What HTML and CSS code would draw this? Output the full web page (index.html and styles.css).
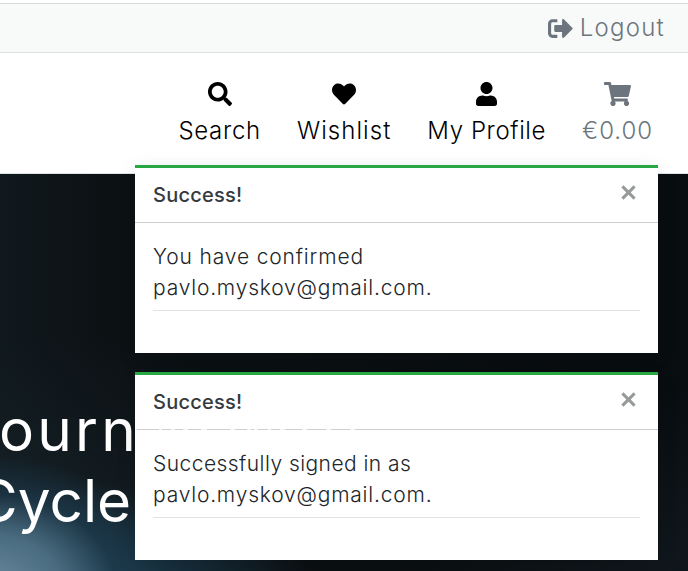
FILE: index.html
```html
<!DOCTYPE html>
<html lang="en">
<head>
<meta charset="utf-8">
<title>Shop</title>
<link rel="stylesheet" href="styles.css">
</head>
<body>
<div class="topbar">
  <a class="logout"><svg class="icon-logout" viewBox="0 0 512 512"><path d="M497 273L329 441c-15 15-41 4.500-41-17v-96H152c-13.300 0-24-10.700-24-24v-96c0-13.300 10.700-24 24-24h136V88c0-21.400 25.900-32 41-17l168 168c9.300 9.400 9.300 24.600 0 34zM192 436v-40c0-6.600-5.400-12-12-12H96c-17.700 0-32-14.300-32-32V160c0-17.700 14.300-32 32-32h84c6.600 0 12-5.400 12-12V76c0-6.600-5.400-12-12-12H96c-53 0-96 43-96 96v192c0 53 43 96 96 96h84c6.600 0 12-5.400 12-12z"/></svg><span>Logout</span></a>
</div>
<header class="nav">
  <a class="item search"><svg class="icon" viewBox="0 0 512 512"><path d="M505 442.700L405.300 343c-4.500-4.500-10.600-7-17-7H372c27.600-35.300 44-79.700 44-128C416 93.100 322.900 0 208 0S0 93.100 0 208s93.100 208 208 208c48.300 0 92.700-16.400 128-44v16.300c0 6.400 2.500 12.500 7 17l99.700 99.700c9.400 9.400 24.600 9.400 33.900 0l28.300-28.300c9.400-9.400 9.400-24.600.1-34zM208 336c-70.700 0-128-57.200-128-128 0-70.700 57.200-128 128-128 70.700 0 128 57.200 128 128 0 70.700-57.200 128-128 128z"/></svg><span>Search</span></a>
  <a class="item wish"><svg class="icon" viewBox="0 0 512 512"><path d="M462.300 62.600C407.500 15.900 326 24.300 275.700 76.200L256 96.500l-19.700-20.300C186.100 24.300 104.500 15.900 49.700 62.600c-62.800 53.600-66.100 149.800-9.900 207.900l193.500 199.800c12.500 12.900 32.800 12.900 45.300 0l193.500-199.800c56.300-58.100 53-154.300-9.800-207.900z"/></svg><span>Wishlist</span></a>
  <a class="item profile"><svg class="icon" viewBox="0 0 448 512"><path d="M224 256c70.700 0 128-57.300 128-128S294.700 0 224 0 96 57.300 96 128s57.300 128 128 128zm89.600 32h-16.700c-22.200 10.200-46.900 16-72.900 16s-50.600-5.800-72.900-16h-16.700C60.200 288 0 348.200 0 422.400V464c0 26.500 21.500 48 48 48h352c26.500 0 48-21.500 48-48v-41.600c0-74.200-60.200-134.400-134.400-134.400z"/></svg><span>My Profile</span></a>
  <a class="item cart"><svg class="icon" viewBox="0 0 576 512"><path d="M528.100 301.300l47.300-208C578.800 78.300 567.400 64 552 64H159.200l-9.200-44.800C147.800 8 137.900 0 126.500 0H24C10.700 0 0 10.700 0 24v16c0 13.300 10.700 24 24 24h69.900l70.200 343.400C147.300 417.100 136 435.200 136 456c0 30.900 25.100 56 56 56s56-25.100 56-56c0-15.700-6.400-29.800-16.800-40h209.600C430.400 426.200 424 440.300 424 456c0 30.900 25.100 56 56 56s56-25.100 56-56c0-22.200-12.900-41.300-31.600-50.400l5.500-24.300c3.400-15-8-29.300-23.400-29.300H218.100l-6.500-32h293.100c11.200 0 20.900-7.800 23.400-18.700z"/></svg><span>€0.00</span></a>
</header>
<main class="hero">
  <h1 class="headline"><span class="line one">ourn</span><span class="line two">Cycle</span></h1>
</main>
<div class="toasts">
  <section class="toast">
    <div class="toast-head"><strong>Success!</strong><svg class="close" viewBox="0 0 14 14"><path d="M2 2L12 12M12 2L2 12"/></svg></div>
    <div class="toast-body"><p><span class="confirmed">You have confirmed</span><br><span class="mail">pavlo.myskov@gmail.com.</span></p></div>
  </section>
  <section class="toast second">
    <div class="toast-head"><strong>Success!</strong><svg class="close" viewBox="0 0 14 14"><path d="M2 2L12 12M12 2L2 12"/></svg></div>
    <div class="toast-body"><p><span class="signed">Successfully signed in as</span><br><span class="mail">pavlo.myskov@gmail.com.</span></p></div>
  </section>
</div>
</body>
</html>
```

FILE: styles.css
```css
* { box-sizing: border-box; }
body {
  margin: 0; width: 688px; height: 571px; overflow: hidden; background: #fff;
  font-family: Inter, "Liberation Sans", sans-serif; font-weight: 300; color: #212529;
  position: relative; padding-top: 3px;
}
svg { display: block; fill: currentColor; }
.topbar {
  height: 50px; background: #f8faf9;
  border-top: 1px solid #d9dcdc; border-bottom: 1px solid #dcdfdf;
  display: flex; justify-content: flex-end; padding: 0 23px 0 0;
}
.logout { display: flex; align-items: center; gap: 7px; color: #6c757d; font-size: 24px; line-height: 48px; letter-spacing: 1.25px; }
.icon-logout { width: 25px; height: 25px; }
.nav {
  height: 121px; border-bottom: 1px solid #dee2e6; padding: 29px 35px 0 0;
  display: flex; justify-content: flex-end; gap: 36px;
}
.item { display: flex; flex-direction: column; align-items: center; color: #000; font-size: 24px; white-space: nowrap; }
.icon { height: 24px; margin-bottom: 13px; }
.item span { line-height: 24px; }
.search { letter-spacing: .7px; }
.wish { letter-spacing: 1.05px; }
.profile { letter-spacing: .6px; }
.cart { color: #6c757d; letter-spacing: .95px; }
.hero {
  height: 397px; overflow: hidden;
  background:
    radial-gradient(ellipse 180px 135px at -10px 415px, #6a8b9e 0, #4a6c80 40%, rgba(30,58,76,.7) 70%, rgba(17,27,33,0) 100%),
    radial-gradient(ellipse 230px 100px at 80px 410px, rgba(28,66,88,.95), rgba(17,27,33,0)),
    radial-gradient(ellipse 260px 190px at 60px 350px, rgba(22,34,41,.75), rgba(17,25,30,0)),
    radial-gradient(ellipse 300px 180px at 688px 397px, #10171c, rgba(16,23,28,0)),
    linear-gradient(90deg, #10191d 0, #0c1114 15%, #0a0e10 75%, #080d10 100%);
}
.headline { margin: 0; padding-top: 220px; font-size: 58.5px; font-weight: 400; color: #fff; line-height: 71px; }
.line { display: block; white-space: nowrap; }
.one { letter-spacing: 3.2px; margin-left: -1px; }
.two { margin-left: -25px; }
.toasts { position: absolute; left: 135px; top: 165px; width: 523px; display: flex; flex-direction: column; gap: 19px; }
.toast { height: 188px; background: #fff; border-top: 3px solid #28a745; box-shadow: 0 4px 18px rgba(0,0,0,.1); }
.toast-head { position: relative; height: 55px; padding: 0 21px 0 18px; border-bottom: 1px solid #ccced0; display: flex; justify-content: space-between; align-items: flex-start; }
.toast-head strong { font-size: 20px; font-weight: 500; line-height: 54px; color: #343a40; letter-spacing: .25px; }
.second .toast-head::after {
  content: ""; position: absolute; left: 0; bottom: -1px; width: 226px; height: 1px;
  background: linear-gradient(90deg, #f4f4f4 2px, transparent 2px 24px, #f4f4f4 24px 27px, transparent 27px 36px, #f4f4f4 36px 40px, transparent 40px 48px, #f4f4f4 48px 53px, transparent 53px 66px, #f4f4f4 66px 72px, transparent 72px 95px, #f4f4f4 95px 100px, transparent 100px 112px, #f4f4f4 112px 116px, transparent 116px 119px, #f4f4f4 119px 123px, transparent 123px 133px, #f4f4f4 133px 136px, transparent 136px 145px, #f4f4f4 145px 150px, transparent 150px 167px, #f4f4f4 167px 172px, transparent 172px 191px, #f4f4f4 191px 196px, transparent 196px 215px, #f4f4f4 215px 220px, transparent 220px);
}
.close { width: 17px; height: 17px; margin-top: 16px; stroke: #979a9b; stroke-width: 2.5; }
.toast-body { padding: 18px 18px 0; }
.toast-body p { margin: 0; height: 70px; border-bottom: 1px solid #e2e3e4; font-size: 21px; line-height: 31px; }
.confirmed { letter-spacing: .85px; }
.signed { letter-spacing: .45px; }
.mail { letter-spacing: .8px; }
```
